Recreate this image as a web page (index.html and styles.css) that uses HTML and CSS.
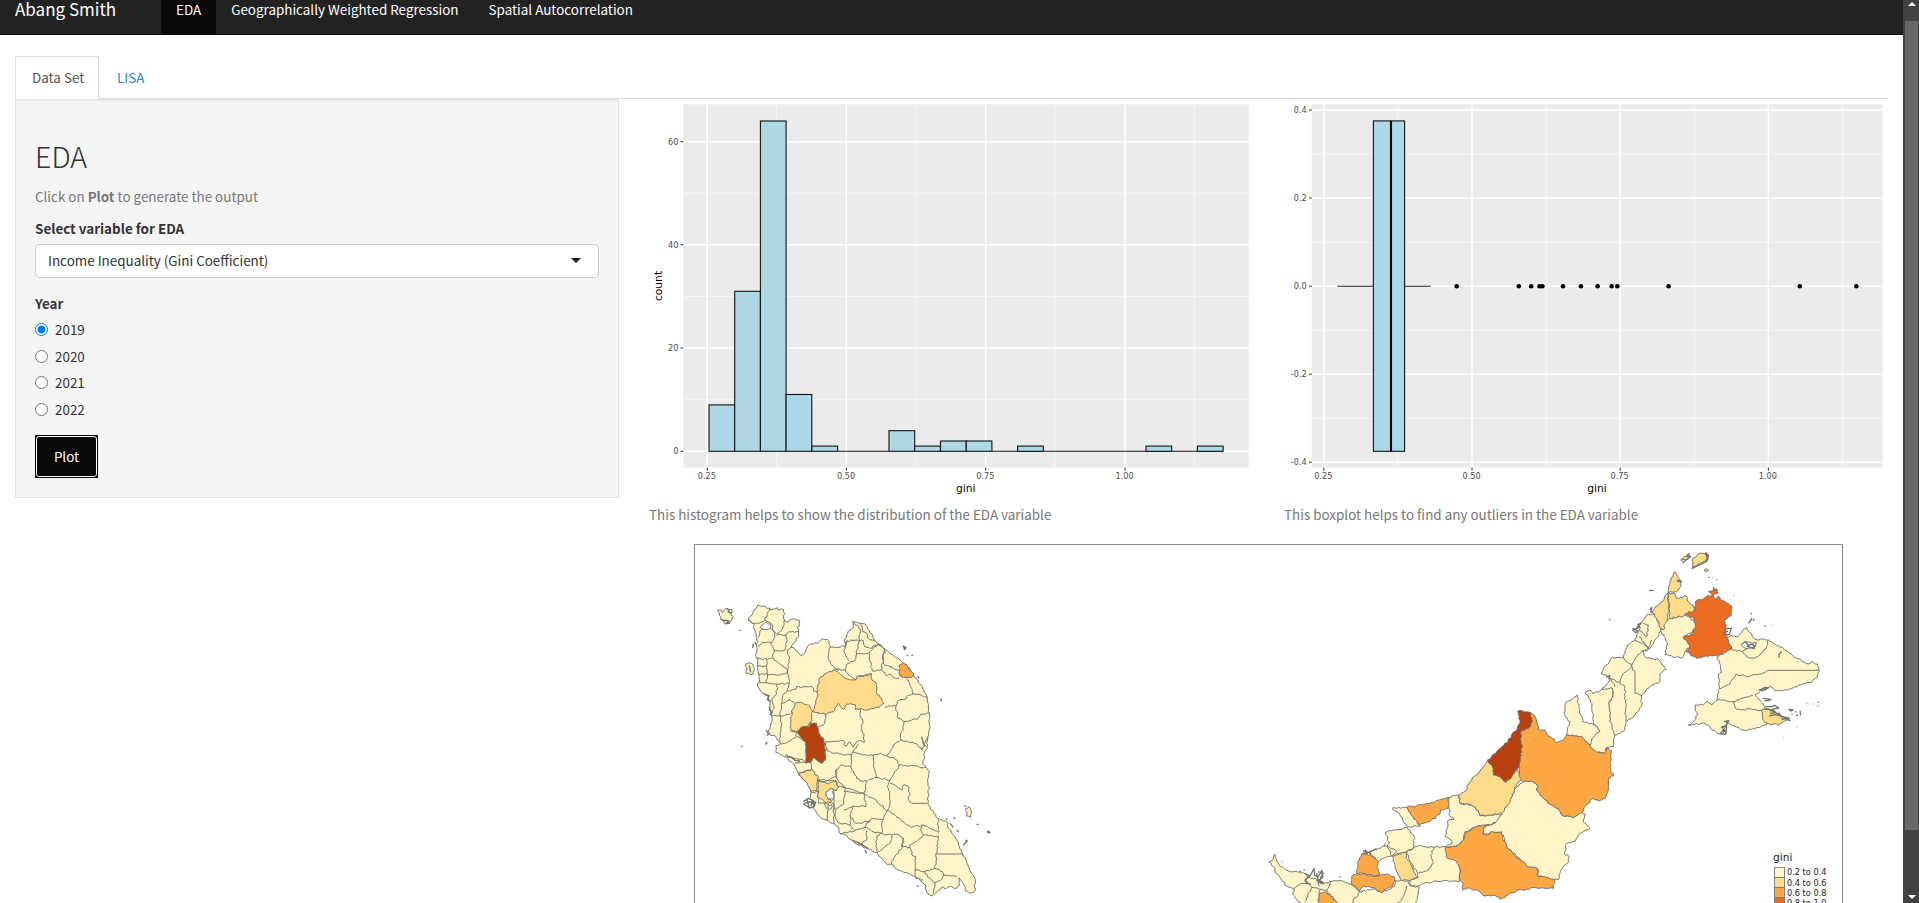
FILE: index.html
```html
<!DOCTYPE html>
<html lang="en">
<head>
<meta charset="utf-8">
<title>Abang Smith</title>
<link rel="stylesheet" href="styles.css">
</head>
<body>
<div class="page">
  <nav class="navbar">
    <span class="brand">Abang Smith</span>
    <a class="nav-link active">EDA</a>
    <a class="nav-link">Geographically Weighted Regression</a>
    <a class="nav-link">Spatial Autocorrelation</a>
  </nav>
  <div class="container">
    <div class="tabs">
      <a class="tab selected">Data Set</a>
      <a class="tab">LISA</a>
    </div>
    <div class="row">
      <form class="well">
        <h2 class="title">EDA</h2>
        <p class="help">Click on <b>Plot</b> to generate the output</p>
        <label class="label">Select variable for EDA</label>
        <div class="select"><span>Income Inequality (Gini Coefficient)</span><i class="caret"></i></div>
        <label class="label year">Year</label>
        <div class="radios">
          <label class="radio"><i class="dot on"></i>2019</label>
          <label class="radio"><i class="dot"></i>2020</label>
          <label class="radio"><i class="dot"></i>2021</label>
          <label class="radio"><i class="dot"></i>2022</label>
        </div>
        <div class="btn"><span class="btn-in">Plot</span></div>
      </form>
      <main class="main">
        <div class="plots">
          <figure class="plot hist">
            <svg width="620" height="400" viewBox="649 99 620 400">
              <rect x="683.3" y="104.3" width="565.3" height="363.4" fill="#ebebeb"/>
              <path class="minor" d="M776.7 104.3V467.7M915.9 104.3V467.7M1055.1 104.3V467.7M1194.3 104.3V467.7M683.3 193.3H1248.6M683.3 296.4H1248.6M683.3 399.7H1248.6"/>
              <path class="major" d="M707.3 104.3V467.7M846.4 104.3V467.7M985.7 104.3V467.7M1125.1 104.3V467.7M683.3 141.7H1248.6M683.3 244.8H1248.6M683.3 348H1248.6M683.3 451.3H1248.6"/>
              <g class="bars">
                <rect x="709" y="404.9" width="25.7" height="46.4"/>
                <rect x="734.7" y="291.3" width="25.7" height="160"/>
                <rect x="760.4" y="121" width="25.7" height="330.3"/>
                <rect x="786.1" y="394.5" width="25.7" height="56.8"/>
                <rect x="811.9" y="446.1" width="25.7" height="5.2"/>
                <path d="M837.6 451.3H889"/>
                <rect x="889" y="430.7" width="25.7" height="20.6"/>
                <rect x="914.7" y="446.1" width="25.7" height="5.2"/>
                <rect x="940.5" y="441" width="25.7" height="10.3"/>
                <rect x="966.2" y="441" width="25.7" height="10.3"/>
                <path d="M992 451.3H1223"/>
                <rect x="1017.6" y="446.1" width="25.7" height="5.2"/>
                <rect x="1146" y="446.1" width="25.7" height="5.2"/>
                <rect x="1197.4" y="446.1" width="25.7" height="5.2"/>
              </g>
              <path class="tick" d="M707.3 467.7v2.8M846.4 467.7v2.8M985.7 467.7v2.8M1125.1 467.7v2.8M680.5 141.7h2.8M680.5 244.8h2.8M680.5 348h2.8M680.5 451.3h2.8"/>
              <g class="lab mid"><text x="706.8" y="478.7">0.25</text><text x="846" y="478.7">0.50</text><text x="985.3" y="478.7">0.75</text><text x="1124.6" y="478.7">1.00</text></g>
              <g class="lab end"><text x="678.5" y="144.8">60</text><text x="678.5" y="247.8">40</text><text x="678.5" y="351">20</text><text x="678.5" y="454.3">0</text></g>
              <text class="axis" x="965.8" y="491.7">gini</text>
              <text class="axis" transform="translate(662 286) rotate(-90)">count</text>
            </svg>
            <figcaption>This histogram helps to show the distribution of the EDA variable</figcaption>
          </figure>
          <figure class="plot box">
            <svg width="604" height="400" viewBox="1284 99 604 400">
              <rect x="1311.8" y="104.3" width="570.8" height="363.4" fill="#ebebeb"/>
              <path class="minor" d="M1397.9 104.3V467.7M1546.3 104.3V467.7M1694.6 104.3V467.7M1842.5 104.3V467.7M1311.8 154H1882.6M1311.8 242.3H1882.6M1311.8 330.3H1882.6M1311.8 418.3H1882.6"/>
              <path class="major" d="M1323.8 104.3V467.7M1472 104.3V467.7M1620.2 104.3V467.7M1768.4 104.3V467.7M1311.8 110H1882.6M1311.8 198H1882.6M1311.8 286.2H1882.6M1311.8 374.3H1882.6M1311.8 462.3H1882.6"/>
              <path d="M1337.5 286.2H1373M1404.7 286.2H1430.6" stroke="#222" stroke-width="1.1"/>
              <g class="bars"><rect x="1373.4" y="120.9" width="31.2" height="330.4"/></g>
              <path d="M1391 121V451.3" stroke="#000" stroke-width="2.1"/>
              <g fill="#000">
                <circle cx="1456.7" cy="286.2" r="2.3"/><circle cx="1518.8" cy="286.2" r="2.3"/><circle cx="1531.2" cy="286.2" r="2.3"/><circle cx="1539.5" cy="286.2" r="2.3"/><circle cx="1542.4" cy="286.2" r="2.3"/><circle cx="1563" cy="286.2" r="2.3"/><circle cx="1581" cy="286.2" r="2.3"/><circle cx="1597.6" cy="286.2" r="2.3"/><circle cx="1611.7" cy="286.2" r="2.3"/><circle cx="1617.3" cy="286.2" r="2.3"/><circle cx="1668.6" cy="286.2" r="2.3"/><circle cx="1799.8" cy="286.2" r="2.3"/><circle cx="1856.3" cy="286.2" r="2.3"/>
              </g>
              <path class="tick" d="M1323.8 467.7v2.8M1472 467.7v2.8M1620.2 467.7v2.8M1768.4 467.7v2.8M1309 110h2.8M1309 198h2.8M1309 286.2h2.8M1309 374.3h2.8M1309 462.3h2.8"/>
              <g class="lab mid"><text x="1323.3" y="478.7">0.25</text><text x="1471.6" y="478.7">0.50</text><text x="1619.6" y="478.7">0.75</text><text x="1767.8" y="478.7">1.00</text></g>
              <g class="lab end"><text x="1306.8" y="113">0.4</text><text x="1306.8" y="201">0.2</text><text x="1306.8" y="289.2">0.0</text><text x="1306.8" y="377.3">-0.2</text><text x="1306.8" y="465.3">-0.4</text></g>
              <text class="axis" x="1597" y="491.7">gini</text>
            </svg>
            <figcaption>This boxplot helps to find any outliers in the EDA variable</figcaption>
          </figure>
        </div>
        <svg class="map" width="1239" height="363" viewBox="649 540 1239 363">
          <path class="frame" d="M694.5 910V544.5H1842.5V910"/>
          <!-- Peninsular districts -->
          <g class="land" transform="translate(690 540) scale(.33333)">
            <path class="a" d="M203 195L215 199L238 204L245 210L262 202L267 210L281 209L283 240L296 246L303 238L327 240L328 258L321 262L326 275V290L318 295L312 310L303 322L315 328L332 346L347 336L353 318L368 312L385 308L400 297L412 298L418 305L420 322L437 323L451 322L455 317L466 320L462 300L470 285L480 270L490 262L488 245L510 250L530 256L538 272L548 290L553 302L566 312L590 330L612 348L632 362L650 374L662 390L671 406L680 418L690 432L702 450L712 474L715 500L718 520L716 545L721 562L714 590L710 610L712 625L703 635L704 650L698 665L708 682L719 695L714 715L716 740L714 790L725 810L743 835L770 845L778 868L795 890L808 920L818 942L830 965L838 985L850 1005L856 1030L855 1052L840 1060L826 1053L822 1035L805 1014L810 1035L800 1045L785 1040L770 1045L755 1042L742 1055L730 1065L722 1068L710 1055L707 1035L690 1020L675 1012L655 1000L625 990L605 973L590 972L575 955L560 938L535 928L505 915L485 900L470 887L450 880L447 865L433 850L400 838L380 820L368 805L375 790L360 775L365 755L352 730L335 715L325 700L315 680L290 652L275 645L258 638L257 618L272 612L262 600L258 590L240 585L236 570L247 540L245 527L237 510L240 490L235 470L222 460L210 450L202 432L210 425L205 400L203 385V355L198 350L200 320L203 305L198 290L195 270L188 250L175 240L188 220Z"/>
            <path class="n" d="M175 240L188 250L210 248L225 240L232 220L238 204M225 240L243 250L250 272L262 284L276 270L284 240M250 272L235 264L213 270L203 292M250 272L255 290L243 308L223 308L203 318M243 308L252 330L250 355L232 358L198 355M262 284L288 285L296 275L326 275M288 285L291 300L285 330L252 332M291 330L303 322M250 355L268 370L290 385L292 398L265 405L232 402L230 358M291 330L298 355L292 398L298 430L292 452M203 378L230 380M205 402L232 402L228 428L208 430M228 428L262 432L298 430M262 432L260 460L247 475L252 500L245 527M292 452L280 462L274 490L270 527L245 527M292 452L318 448L320 440L368 442L370 452L382 455M274 490L300 480L316 490M270 527L300 523L305 510M270 527L275 550L270 580L268 608M300 572L320 575L318 590L290 608L270 612M420 322L415 345L420 370L440 388L465 390L468 375L495 360L500 342L537 340M466 320L470 302L520 302M470 302L462 330L475 362M488 245L512 268L508 300L500 342M512 250L518 275L530 280L535 295L553 302M520 302L524 320L540 325L566 312M537 340L545 330L566 312L584 330L580 350L575 390L546 392L540 362L537 340M418 395L432 390L450 388M466 390L475 405L497 418L505 408L546 402M575 390L590 408L602 402L610 412L628 415M584 330L577 355L580 372L598 380L628 390L630 408L660 412M650 415L662 440L672 462L690 464L712 474M672 462L655 465L650 475L622 484L618 498L585 500M618 498L622 530L642 545L682 538L693 522L718 520M642 545L640 570L632 580L634 600L680 612L696 630L712 590M634 600L610 615L600 635L592 648M592 648L620 660L628 675L708 682M592 648L572 640L550 645V660L555 690L560 712L600 722L628 675M372 515L385 520L405 515L407 535L400 555L385 562M405 515L420 508L438 498M505 505L512 510L510 530L518 540L515 560L525 605L505 602L490 622L480 605L465 618L460 602L405 605M405 605L410 630L430 640L485 645L505 612M485 645L482 680L470 678L455 675L438 690L440 710L400 725L380 715M490 638L520 645L550 645M482 680L500 715L520 725L560 712M438 690L440 715L460 740L522 762L530 725M438 722L445 740L465 742L462 790L440 808L432 800V740M462 755L522 760L528 800L490 798L462 810M522 762L550 775L592 812L580 840L545 835L530 845L500 850L480 830L490 798M600 722L592 740L600 755L598 800L592 812M600 730L620 740L635 750L640 735L655 738L660 760L655 775L665 790H712M592 812L612 822L650 855L665 862L700 855L745 878L745 838M700 855L692 870L700 885L745 888L740 940M737 942H818M700 885L685 900L660 915L665 945L678 950L675 990M578 842L575 880L555 878L525 862L540 840M525 862L495 872L480 855L482 832M495 872L450 880M530 872L530 900L505 915M575 880L560 888L558 915L562 938M575 880L605 885L600 910L565 935M605 885L622 883L640 895L635 925L610 955L605 973M640 895L635 920L660 922M675 990L705 995L735 985L738 940M735 985L758 995L762 1005L800 1010M705 995L712 1010L735 1028L755 1018L762 1005M675 990L678 1012L700 1020M735 1028L730 1060M285 645L350 665L348 608L320 590M315 668L350 668M325 700L365 688L362 655M365 688L385 720L438 722M385 755L362 760M385 755L385 790L430 790M402 788L415 810L412 840M430 790L432 848M433 800L440 840L450 850L480 855"/>
            <path class="w" d="M210 262L225 248L240 252L243 264L228 268L215 266Z"/>
            <path class="b" d="M418 395L432 390L450 402L475 418L497 420L500 410L520 410L545 402L546 420L558 430L560 460L575 475L582 490L570 500L545 505L530 510L513 505L495 508L497 495L470 492L462 508L445 490L438 500L430 515L405 523L385 518L368 515L375 495L382 470L383 440L392 410ZM316 490L335 487L355 495L368 512L365 545L348 560L330 565L322 575L310 573L300 560L303 530L308 508ZM328 702L365 688L385 712L380 752L362 755L352 730ZM385 722L410 730L438 724L446 742L440 752L425 748L408 758L415 778L426 784L405 788L385 770L385 750Z"/>
            <path class="w" d="M408 758L420 745L430 750L430 778L415 778ZM413 793L426 795L424 806L414 806Z"/>
            <path class="c" d="M628 375L640 370L655 382L671 406L665 412H640L628 402Z"/>
            <path class="e" d="M322 575L335 562L358 560L362 549L380 550L384 565L390 585L402 600L405 635L407 660L395 670L368 653L362 668L348 670V608L335 595Z"/>
            <path class="a" d="M82 212L95 210L97 218L107 206L125 208L122 225L130 230L120 245L105 252L100 240L92 238L88 222ZM168 372L185 370L194 385L190 402L168 400ZM828 805L838 800L845 818L842 832L830 828Z"/>
            <path class="isl" d="M95 240l22 3l-9 8l12 -2M110 205l8 6l-4 5l12 3M190 310l-2 14M146 271l5 1M195 305l2 8M178 376l4 22M222 462l15 5l-5 12l10 5M340 785l15 -10l10 5l12 8l-6 12l-12 4l-18 -12l12 -6l15 0l5 16M350 775l8 30M370 780l-8 18M237 500l8 20l-6 5M228 570l8 12l-6 4M226 614l6 -8M153 619l5 1M290 650l15 3l10 8l15 2M640 318l8 5l-4 6zM650 345l3 3M665 344l3 4M683 410l5 5M752 475l3 9M790 833l6 3M780 850l10 12M800 870l6 6M860 852l6 3M893 873l7 4l-6 2zM825 900l7 3l-12 12M768 835l3 5M525 930l5 10M680 1037l6 2M695 590l5 20l6 10M485 900l20 8l30 18M823 796l5 4"/>
          </g>
          <!-- Sarawak -->
          <g class="land" transform="translate(1250 680) scale(.33333)">
            <path class="a" d="M945 70L958 62L982 45L985 70L998 125L1035 135L1050 155L1065 165L1072 200L1065 218L1040 217L1015 192L995 170L950 165L952 148L960 125L945 110Z"/>
            <path class="a" d="M427 385L470 382L490 410L510 440L475 440L460 425L450 405ZM596 352L625 345L632 372L665 375L685 392L690 408L755 403L750 420L720 435L680 440L645 455L640 482L615 502L588 500L606 490L603 480L585 470L595 420L613 418L596 402L600 392L596 385ZM406 457L472 442L482 458L492 470L490 505L470 515L425 528L412 500L418 490ZM358 518L402 498L418 500L440 515L425 528L400 535L385 545L370 530ZM470 515L505 498L552 502L588 500L592 530L625 540L630 570L628 605L555 602L498 620L478 612L480 600L505 592L500 575L480 545Z"/>
            <path class="a" d="M820 305L848 303L865 320L860 330L880 355L900 372L925 385L940 408L970 412L995 395L1005 402L1000 425L1020 445L990 460L975 485L950 490L945 525L958 530L955 548L940 560L930 580L925 598L905 600L880 592L862 585L865 568L830 560L820 545L790 520L770 500L755 455L720 462L700 462L697 445L720 435L735 430L755 405V395L780 360L800 320Z"/>
            <path class="a" d="M57 545L68 540L75 522L80 545L95 560L120 575L160 578L172 590L200 598L215 612L245 605L270 602L303 612L330 635L375 625L395 638L432 620L435 602L475 602L480 618L508 622L495 690H165L130 645L132 625L110 618L95 600L78 580L75 565Z"/>
            <path class="n" d="M132 625L150 612L180 610L185 622L165 665M185 622L210 628L205 665M210 628L230 630L245 605M230 630L260 665M330 635L310 660L300 680M470 618L460 650L435 680M552 502L542 525L550 545L535 570L505 580M172 590L165 605L180 615M406 490L402 498M200 598L210 620"/>
            <path class="b" d="M625 345L650 330L652 315L672 290L690 275L712 240L728 262L730 285L750 290L768 307L785 290L800 265L820 295L800 315L780 365L755 400L720 405L690 408L685 392L665 375L632 370ZM427 530L470 515L468 535L480 545L490 570L502 590L485 598L455 602L445 585L435 560Z"/>
            <path class="c" d="M840 97L855 108L862 130L865 148L885 150L890 162L905 172L920 188L935 182L950 165L995 170L1015 192L1040 215L1062 220L1070 203L1085 213L1082 230L1080 260L1090 288L1075 295V330L1065 355L1045 363L1030 355L1010 375L995 398L970 412L940 408L925 385L900 372L880 355L860 330L865 320L848 303L820 305L808 290V262L815 215L812 155L835 145L847 125ZM470 382L530 370L595 352L594 385L572 390L570 402L540 425L510 434L490 415ZM588 500L618 500L640 480L645 457L680 440L718 433L700 445L698 462L712 465L725 455L752 458L770 500L795 530L820 545L832 560L860 565L865 590L895 592L915 602L910 625L870 625L850 622L835 630L810 628L775 645L750 658L735 645L705 648L680 630L650 625L638 630L640 610L630 600L632 570L620 545L588 530ZM345 520L365 530L385 545L380 560L390 585L370 588L340 580L320 582L325 545L335 522ZM308 585L345 582L370 590L410 582L435 592L430 615L412 625L395 638L375 625L340 618L330 632L305 612ZM210 640L225 635L262 669V700H205Z"/>
            <path class="e" d="M803 93L840 97L847 125L835 145L812 155L815 215L808 262L800 270L785 290L768 307L750 290L730 285L728 262L712 240L740 215L770 188L785 165L802 145L810 120Z"/>
            <path class="isl" d="M165 580l15 8l12 -22l2 20l10 5l12 -20l2 22l-12 8l10 4l5 8M180 590l-15 10l8 8M148 573l5 2M96 545l2 2M162 568l1 4M205 575l15 5l-10 15M268 590l4 1M340 512l12 8l-10 2l15 -6l6 8M345 510l10 8l25 -12M200 580l5 25l12 4"/>
          </g>
          <!-- Sabah -->
          <g class="land" transform="translate(1580 540) scale(.33333)">
            <path class="a" d="M15 458L28 450L40 462L65 448L88 440L100 445L98 470L88 485L92 520L90 545L105 560V585L100 620L80 622L75 640L50 637L30 620L35 600L48 582L60 572L40 550L38 520L32 480Z"/>
            <path class="a" d="M65 402L72 382L98 352L130 352L142 315L165 302L178 270L182 250L205 222L225 225L242 268L232 292L210 325L188 335L195 350L225 360L232 355L258 388L240 402V425L215 435L185 465L183 500L165 525L140 545L135 570L105 585L90 545L92 520L88 485L100 470L98 445L65 448L85 428L88 412Z"/>
            <path class="a" d="M242 270L258 240L275 235L315 225L340 240L348 258L338 275L310 290L330 318L315 335L305 355L255 345L262 310L252 290Z"/>
            <path class="a" d="M440 290L475 288L488 272L500 262L525 298L565 300L610 325L650 355L685 372L695 365L712 372L718 395L712 412L690 428L645 440L625 450L585 452L572 440L550 448L525 465L540 480L555 505L560 555L520 565L500 573L465 560L440 545L428 582L412 580L375 550L325 555L340 545L352 525L345 495L370 495L383 483L395 495L412 480L418 440L415 405L425 398L412 350L455 328Z"/>
            <path class="n" d="M130 352L155 378L165 355L182 338L205 325L188 310L165 302M178 290L205 325L215 300M155 378L165 400V460L185 465M155 378L130 400L120 430L135 440L138 545M88 412L120 430M105 440L88 412M178 270L200 290L205 255L190 250M455 328L488 335L500 350L520 355L540 345L560 320L565 300M488 335L530 305M418 445L450 432L468 402L500 410L545 402L565 391H718M412 480L460 485L520 465M460 485L470 508L525 508L550 515"/>
            <path class="w" d="M485 312L500 305L528 310L522 325L490 322Z"/>
            <path class="b" d="M265 158L270 125L285 95L300 118L302 140L290 155L265 158L268 200L262 235L250 270L238 262L232 238L215 215L245 185ZM265 158L285 162L290 175L318 168L330 190L345 205L342 218L310 228L270 235L265 200ZM338 55L358 40L380 38L378 60L338 82ZM303 62L312 50L328 45L322 58ZM545 510L560 505L590 520L605 535L628 535L600 552L570 555L548 540ZM372 90L380 86L385 92L377 96Z"/>
            <path class="d" d="M348 183L372 175L385 165L400 168L410 180L415 168L428 182L455 198L452 228L432 240L438 262L435 285L455 325L415 345L372 350L350 355L318 335L332 322L310 292L338 282L348 258L340 235L315 222L345 210ZM385 155L405 152L400 142L412 148L414 160L398 166Z"/>
            <path class="isl" d="M335 86l45 -22l6 -18l-10 -6l8 20l-8 4M328 40l-8 8l12 2l-25 18M290 120l14 5l-12 0M158 265l15 8l-5 5l-10 -8l20 -8l-4 -8l12 -6M170 262l12 -10M210 210l5 -8l-2 18M78 412l12 -5l-4 10M87 238l4 2M207 151l14 0M432 270l10 -5l12 0l-6 18l-10 2l-6 -8l12 -4M485 312l12 -6l8 10l12 -4l8 8M500 318l22 8l5 -12M605 335l-8 8v10M540 450l15 -8l10 2l-15 8l-14 -3M548 475l25 3l-8 4l-12 0M556 500l20 0l8 -4l12 8l-20 4l10 8l-18 -8l-12 0M570 520l18 -2l10 8l-15 -2l-15 4M595 518l8 10l25 8M625 508l14 2l-10 3M635 522l2 2M645 515l4 1M648 527l6 -2M660 512l2 14M650 560l2 0M610 592l1 0M680 490l2 0M700 492l2 0M715 485l0 4M715 496l-2 2M505 250l8 -10l2 -6M512 220l4 3M518 238l6 3M553 257l4 2M577 252l1 1M450 180l1 0M460 167l2 1M487 184l1 0M385 112l4 1M397 113l1 0M409 118l2 2M425 565l15 -10l-3 28l-16 -2l8 -10l10 6l-14 -16l14 -4M432 545l14 -3l-6 12M605 540l10 -4l15 6l-12 -8"/>
          </g>
          <g class="legend">
            <text x="1773" y="860.7" class="leg-title">gini</text>
            <rect x="1774.5" y="867.4" width="10" height="10.1" fill="#fff5c9"/>
            <rect x="1774.5" y="877.5" width="10" height="10.1" fill="#fedc8c"/>
            <rect x="1774.5" y="887.6" width="10" height="10.1" fill="#fea845"/>
            <rect x="1774.5" y="897.7" width="10" height="10.1" fill="#eb6c20"/>
            <text x="1787" y="875">0.2 to 0.4</text>
            <text x="1787" y="885.6">0.4 to 0.6</text>
            <text x="1787" y="895.8">0.6 to 0.8</text>
            <text x="1787" y="905.7">0.8 to 1.0</text>
          </g>
        </svg>
      </main>
    </div>
  </div>
</div>
<div class="scrollbar"><i class="up"></i><i class="thumb"></i><i class="down"></i></div>
<script src="coast.js"></script>
</body>
</html>
```
FILE: coast.js
```js
// Adds natural irregularity to district borders. The offsets depend only on
// the segment's end points, so neighbouring districts keep a shared border.
function noise(a, b, c, d, k) {
  const v = Math.sin(a * 12.9898 + b * 78.233 + c * 37.719 + d * 4.581 + k * 91.17) * 43758.5453;
  return (v - Math.floor(v)) * 2 - 1;
}

function roughen(x0, y0, x1, y1) {
  const flip = x0 > x1 || (x0 === x1 && y0 > y1);
  const [ax, ay, bx, by] = flip ? [x1, y1, x0, y0] : [x0, y0, x1, y1];
  const len = Math.hypot(bx - ax, by - ay);
  const n = Math.max(1, Math.round(len / 6));
  const points = [];
  for (let i = 1; i < n; i++) {
    const t = i / n;
    const off = noise(ax, ay, bx, by, i) * 2.6;
    points.push([ax + (bx - ax) * t - (by - ay) / len * off, ay + (by - ay) * t + (bx - ax) / len * off]);
  }
  if (flip) points.reverse();
  points.push([x1, y1]);
  return points.map(p => 'L' + p[0].toFixed(1) + ' ' + p[1].toFixed(1)).join('');
}

document.querySelectorAll('.land path:not(.isl)').forEach(path => {
  let x = 0, y = 0, sx = 0, sy = 0, out = '';
  for (const [, cmd, args] of path.getAttribute('d').matchAll(/([MLHVZ])([^MLHVZ]*)/g)) {
    const p = args.trim().split(/\s+/).map(Number);
    if (cmd === 'M') {
      [x, y] = p; sx = x; sy = y;
      out += 'M' + x + ' ' + y;
    } else if (cmd === 'L') {
      out += roughen(x, y, p[0], p[1]);
      [x, y] = p;
    } else if (cmd === 'H') {
      x = p[0]; out += 'H' + x;
    } else if (cmd === 'V') {
      y = p[0]; out += 'V' + y;
    } else {
      out += roughen(x, y, sx, sy) + 'Z';
      x = sx; y = sy;
    }
  }
  path.setAttribute('d', out);
});
```
FILE: styles.css
```css
* { box-sizing: border-box; }
html, body { margin: 0; height: 903px; overflow: hidden; background: #fff; }
body {
  display: flex;
  width: 1919px;
  font-family: "Noto Sans CJK SC", "Noto Sans", sans-serif;
  font-size: 13.43px;
  line-height: 21px;
  color: #333;
}
.page { width: 1903px; height: 903px; overflow: hidden; }
.navbar {
  display: flex;
  height: 35px;
  padding-left: 15px;
  background: #222;
  border-bottom: 1px solid #090909;
  color: #fff;
  line-height: 19px;
}
.brand { width: 146px; font-size: 17px; line-height: 18px; white-space: nowrap; }
.nav-link { height: 34px; padding: 0 15px; white-space: nowrap; }
.nav-link.active { background: #090909; }
.container { padding: 21px 15px 0; }
.tabs { display: flex; gap: 2px; height: 43px; border-bottom: 1px solid #ddd; }
.tab { height: 43px; padding: 10px 15px 0; color: #2780e3; border: 1px solid transparent; }
.tab.selected { width: 84px; padding-left: 16px; white-space: nowrap; background: #fff; color: #555; border-color: #ddd; border-bottom-color: #fff; }
.row { display: flex; }
.well {
  flex: none;
  width: 604px;
  height: 399px;
  padding: 38px 19px 0;
  border: 1px solid #e3e3e3;
  background: #f5f5f5;
  box-shadow: inset 0 1px 1px rgba(0,0,0,.05);
}
.title { height: 35px; margin: 0; font-family: "Noto Sans CJK SC Light", "Noto Sans CJK SC", sans-serif; font-size: 28.6px; font-weight: 200; line-height: 35px; }
.help { margin: 13px 0 11px; color: #777; }
.label { display: block; font-weight: 700; }
.select {
  display: flex;
  align-items: center;
  justify-content: space-between;
  height: 34px;
  margin: 5px 0 15px;
  padding: 0 17px 2px 12px;
  border: 1px solid #ccc;
  border-radius: 4px;
  background: #fff;
}
.caret { border: 5px solid transparent; border-top-color: #222; border-bottom: 0; }
.radios { margin: 5px 0 10px; }
.radio { display: flex; height: 26.6px; gap: 7px; }
.dot { width: 13px; height: 13px; margin-top: 4px; border: 1px solid #767676; border-radius: 50%; background: #fff; }
.dot.on { border-color: #0075ff; background: radial-gradient(circle, #0075ff 3.5px, #fff 4.3px); }
.btn { width: 63px; height: 43px; padding: 1px; background: #000; }
.btn-in {
  display: block;
  height: 41px;
  border: 1px solid #fff;
  border-radius: 3px;
  background: #090909;
  color: #fff;
  line-height: 38px;
  text-align: center;
}
.main { flex: none; width: 1239px; margin-left: 30px; }
.plots { display: flex; height: 441px; }
.plot { margin: 0; color: #777; }
.plot.hist { width: 635px; }
.plot svg { display: block; }
.plot figcaption { padding: 5px 0 0; white-space: nowrap; }
.minor { fill: none; stroke: #f7f7f7; stroke-width: .9; }
.major { fill: none; stroke: #fff; stroke-width: 1.5; }
.bars { fill: #add8e6; stroke: #111; stroke-width: 1.1; }
.tick { stroke: #333; stroke-width: 1.1; }
.lab { font: 8.2px "DejaVu Sans", sans-serif; fill: #4d4d4d; }
.mid { text-anchor: middle; }
.end { text-anchor: end; }
.axis { font: 10.7px "DejaVu Sans", sans-serif; fill: #000; text-anchor: middle; }
.map { display: block; }
.frame { fill: none; stroke: #888; }
.land path { stroke: #71716a; stroke-width: 2.9; stroke-linejoin: round; }
.land .a { fill: #fff5c9; }
.land .b { fill: #fedc8c; }
.land .c { fill: #fea845; }
.land .d { fill: #eb6c20; }
.land .e { fill: #b7410e; }
.land .w { fill: #fff; }
.land .n { fill: none; }
.land .isl { fill: none; stroke-width: 4; }
.legend { font: 8.2px "DejaVu Sans", sans-serif; fill: #222; }
.legend rect { stroke: #777; stroke-width: .9; }
.leg-title { font-size: 10.6px; }
.scrollbar { display: flex; flex-direction: column; width: 16px; height: 903px; padding: 2px 1px 0 2px; background: #424242; }
.scrollbar i { display: block; }
.up { margin: 0 auto; border: 4px solid transparent; border-top: 0; border-bottom-color: #fff; }
.thumb { height: 809px; margin-top: 15px; background: #686868; }
.down { margin: 65px auto 0; border: 4px solid transparent; border-bottom: 0; border-top-color: #fff; }
```
